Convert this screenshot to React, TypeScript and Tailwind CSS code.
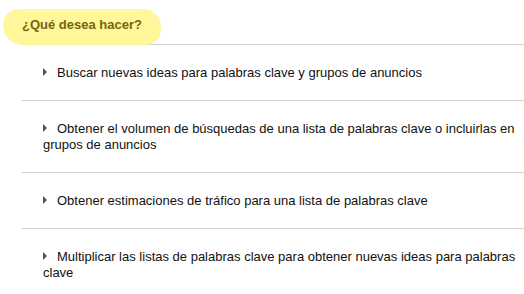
const options = [
  "Buscar nuevas ideas para palabras clave y grupos de anuncios",
  "Obtener el volumen de búsquedas de una lista de palabras clave o incluirlas en grupos de anuncios",
  "Obtener estimaciones de tráfico para una lista de palabras clave",
  "Multiplicar las listas de palabras clave para obtener nuevas ideas para palabras clave",
]

const App = () => {
  return (
    <main className="w-[524px] h-[294px] overflow-hidden bg-white font-['Liberation_Sans',Arial,sans-serif] text-[13px] leading-[16px] text-[#111]">
      <div className="relative h-[44px] pl-[22px] pt-[17px]">
        <span className="absolute left-[3px] top-[9px] w-[158px] h-[36px] rounded-[18px_20px_17px_22px] bg-[#fff68f] opacity-90" />
        <h2 className="relative font-bold text-[#76650f]">¿Qué desea hacer?</h2>
      </div>
      <ul className="ml-[22px] flex flex-col">
        {options.map((opt) => (
          <li key={opt} className="border-t border-[#d0d0d0] pt-[20px] pb-[19px] pl-[21px] pr-[6px]">
            <span className="inline-block align-[1px] mr-[10px] w-0 h-0 border-l-[4px] border-l-[#555] border-y-[4px] border-y-transparent" />
            {opt}
          </li>
        ))}
      </ul>
    </main>
  )
}

export default App
